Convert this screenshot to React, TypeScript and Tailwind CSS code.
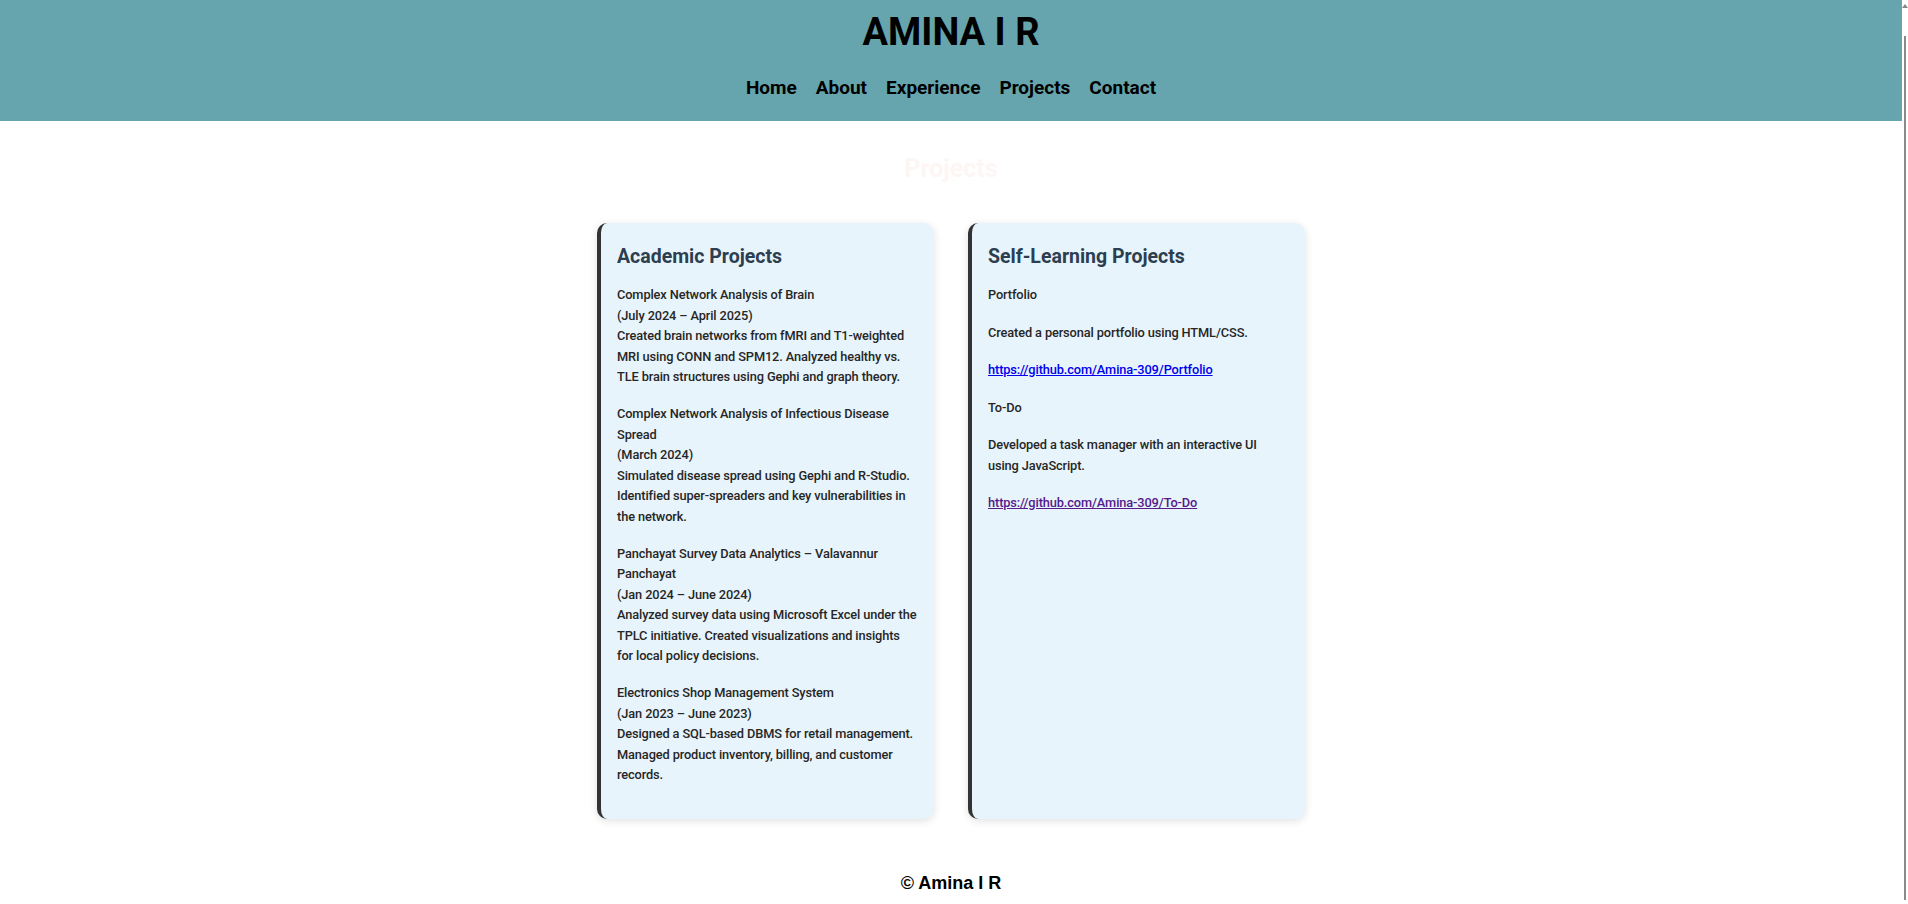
import React from 'react';

const ACADEMIC = [
  {
    title: 'Complex Network Analysis of Brain',
    date: '(July 2024 – April 2025)',
    desc: 'Created brain networks from fMRI and T1-weighted MRI using CONN and SPM12. Analyzed healthy vs. TLE brain structures using Gephi and graph theory.',
  },
  {
    title: 'Complex Network Analysis of Infectious Disease Spread',
    date: '(March 2024)',
    desc: 'Simulated disease spread using Gephi and R-Studio. Identified super-spreaders and key vulnerabilities in the network.',
  },
  {
    title: 'Panchayat Survey Data Analytics – Valavannur Panchayat',
    date: '(Jan 2024 – June 2024)',
    desc: 'Analyzed survey data using Microsoft Excel under the TPLC initiative. Created visualizations and insights for local policy decisions.',
  },
  {
    title: 'Electronics Shop Management System',
    date: '(Jan 2023 – June 2023)',
    desc: 'Designed a SQL-based DBMS for retail management. Managed product inventory, billing, and customer records.',
  },
];

const NAV = ['Home', 'About', 'Experience', 'Projects', 'Contact'];

function Card({ title, children }: { title: string; children: React.ReactNode }) {
  return (
    <div className="w-[337px] bg-[#e8f4fb] border-l-4 border-[#333333] rounded-[10px] shadow-[0_2px_8px_rgba(0,0,0,0.12)] pt-5 pl-4 pr-4 pb-[17px]">
      <h3 className="text-[19.5px] leading-[28px] font-bold text-[#2c3e50] mb-[14px]">{title}</h3>
      <div className="text-[12.8px] leading-[20.5px] font-medium tracking-[-0.12px] text-[#262626]">{children}</div>
    </div>
  );
}

export default function App() {
  return (
    <div className="flex min-h-screen bg-white font-['Roboto','Liberation_Sans',sans-serif]">
      <div className="flex-1 flex flex-col">
        {/* Header */}
        <header className="bg-[#66a5ad] pt-[9px] pb-5 flex flex-col items-center">
          <h1 className="text-[38px] leading-[46px] font-bold text-black">AMINA I R</h1>
          <nav className="mt-[20px] flex gap-[19px] text-[19px] leading-[26px] font-bold text-black">
            {NAV.map(n => (
              <a key={n} href="#">{n}</a>
            ))}
          </nav>
        </header>

        {/* Projects */}
        <section className="flex flex-col items-center">
          <h2 className="mt-[33px] text-[25px] leading-[30px] font-bold text-[#fdf6f4]">Projects</h2>
          <div className="mt-[39px] flex gap-[34px] items-stretch">
            <Card title="Academic Projects">
              {ACADEMIC.map(p => (
                <div key={p.title} className="mb-[16.5px]">
                  <div>{p.title}</div>
                  <div>{p.date}</div>
                  <div>{p.desc}</div>
                </div>
              ))}
            </Card>
            <Card title="Self-Learning Projects">
              <p className="mb-[17px]">Portfolio</p>
              <p className="mb-[17px]">Created a personal portfolio using HTML/CSS.</p>
              <p className="mb-[17px]">
                <a href="#" className="text-[#0000ee] underline">https://github.com/Amina-309/Portfolio</a>
              </p>
              <p className="mb-[17px]">To-Do</p>
              <p className="mb-[17px]">Developed a task manager with an interactive UI using JavaScript.</p>
              <p className="mb-[17px]">
                <a href="#" className="text-[#551a8b] underline">https://github.com/Amina-309/To-Do</a>
              </p>
            </Card>
          </div>
        </section>

        {/* Footer */}
        <footer className="mt-[53px] text-center text-[18px] leading-[22px] font-bold text-black font-['Liberation_Sans',sans-serif]">
          © Amina I R
        </footer>
      </div>

      {/* thin scrollbar */}
      <div className="w-[6px] flex flex-col items-center bg-white">
        <div className="mt-[4px] w-0 h-0 border-l-[3px] border-r-[3px] border-b-[4px] border-l-transparent border-r-transparent border-b-[#888888]" />
        <div className="mt-[28px] flex-1 w-[2px] bg-[#8a8a8a] mb-[4px]" />
      </div>
    </div>
  );
}
